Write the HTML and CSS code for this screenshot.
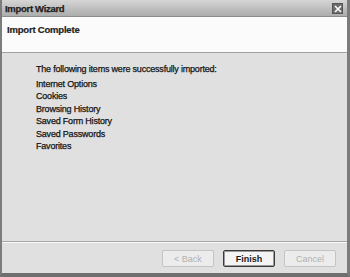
FILE: index.html
```html
<!DOCTYPE html>
<html>
<head>
<meta charset="utf-8">
<link rel="stylesheet" href="styles.css">
</head>
<body>
<div class="window">
  <div class="titlebar">
    <span class="title">Import Wizard</span>
    <span class="close"><svg width="8" height="8" viewBox="0 0 8 8"><path d="M1 1L7 7M7 1L1 7" stroke="#fff" stroke-width="1.6"/></svg></span>
  </div>
  <div class="frame">
    <div class="header">Import Complete</div>
    <div class="content">
      <p class="lead">The following items were successfully imported:</p>
      <ul class="items">
        <li>Internet Options</li>
        <li>Cookies</li>
        <li>Browsing History</li>
        <li>Saved Form History</li>
        <li>Saved Passwords</li>
        <li>Favorites</li>
      </ul>
    </div>
    <div class="footer">
      <button class="btn disabled">&lt; Back</button>
      <button class="btn default">Finish</button>
      <button class="btn disabled">Cancel</button>
    </div>
  </div>
</div>
</body>
</html>
```
FILE: styles.css
```css
html, body {
  margin: 0;
  padding: 0;
  background: #6e6e6e;
}
.window {
  width: 350px;
  height: 277px;
  box-sizing: border-box;
  display: flex;
  flex-direction: column;
  font-family: "Liberation Sans", Arial, sans-serif;
  color: #1a1a1a;
  background: #8a8a8a;
  border-left: 2px solid #7c7c7c;
  border-right: 3px solid #7c7c7c;
  border-bottom: 4px solid #6f6f6f;
}
.titlebar {
  height: 16px;
  flex: none;
  display: flex;
  align-items: center;
  justify-content: space-between;
  padding: 0 4px 0 3px;
  background: linear-gradient(to bottom, #d6d6d6, #bcbcbc 60%, #adadad);
  border-bottom: 1px solid #8c8c8c;
}
.title {
  font-weight: bold;
  font-size: 9.5px;
  color: #1e1e1e;
  letter-spacing: -0.3px;
  -webkit-text-stroke: 0.25px #1e1e1e;
}
.close {
  width: 9px;
  height: 9px;
  background: #6d6d6d;
  border: 1px solid #555;
  display: flex;
  align-items: center;
  justify-content: center;
  margin-top: 1px;
}
.frame {
  flex: 1;
  display: flex;
  flex-direction: column;
  background: #e0e0e0;
}
.header {
  height: 36px;
  flex: none;
  box-sizing: border-box;
  background: #fbfbfb;
  border-bottom: 1px solid #a0a0a0;
  padding: 7px 0 0 5px;
  font-weight: bold;
  font-size: 9.5px;
  letter-spacing: -0.2px;
  color: #1e1e1e;
  -webkit-text-stroke: 0.2px #1e1e1e;
}
.content {
  flex: 1;
  padding: 10px 0 0 34px;
  font-size: 9px;
  letter-spacing: -0.2px;
  color: #141414;
  -webkit-text-stroke: 0.25px #141414;
  border-bottom: 1px solid #a6a6a6;
  box-shadow: 0 1px 0 #f8f8f8;
}
.lead {
  margin: 0 0 2px;
  line-height: 12.5px;
}
.items {
  list-style: none;
  margin: 0;
  padding: 0;
}
.items li {
  line-height: 12.5px;
}
.footer {
  height: 31px;
  flex: none;
  box-sizing: border-box;
  display: flex;
  justify-content: flex-end;
  align-items: center;
  gap: 9px;
  padding: 2px 11px 0 0;
}
.btn {
  width: 52px;
  height: 17px;
  padding: 0;
  font-family: "Liberation Sans", Arial, sans-serif;
  font-size: 9px;
  background: #ececec;
  border: 1px solid #c4c4c4;
  border-radius: 2px;
  color: #b0b0b0;
}
.btn.default {
  color: #1a1a1a;
  font-weight: bold;
  border: 1px solid #3a3a3a;
  box-shadow: inset 0 0 0 1px #9a9a9a;
  background: #f4f4f4;
}
```
